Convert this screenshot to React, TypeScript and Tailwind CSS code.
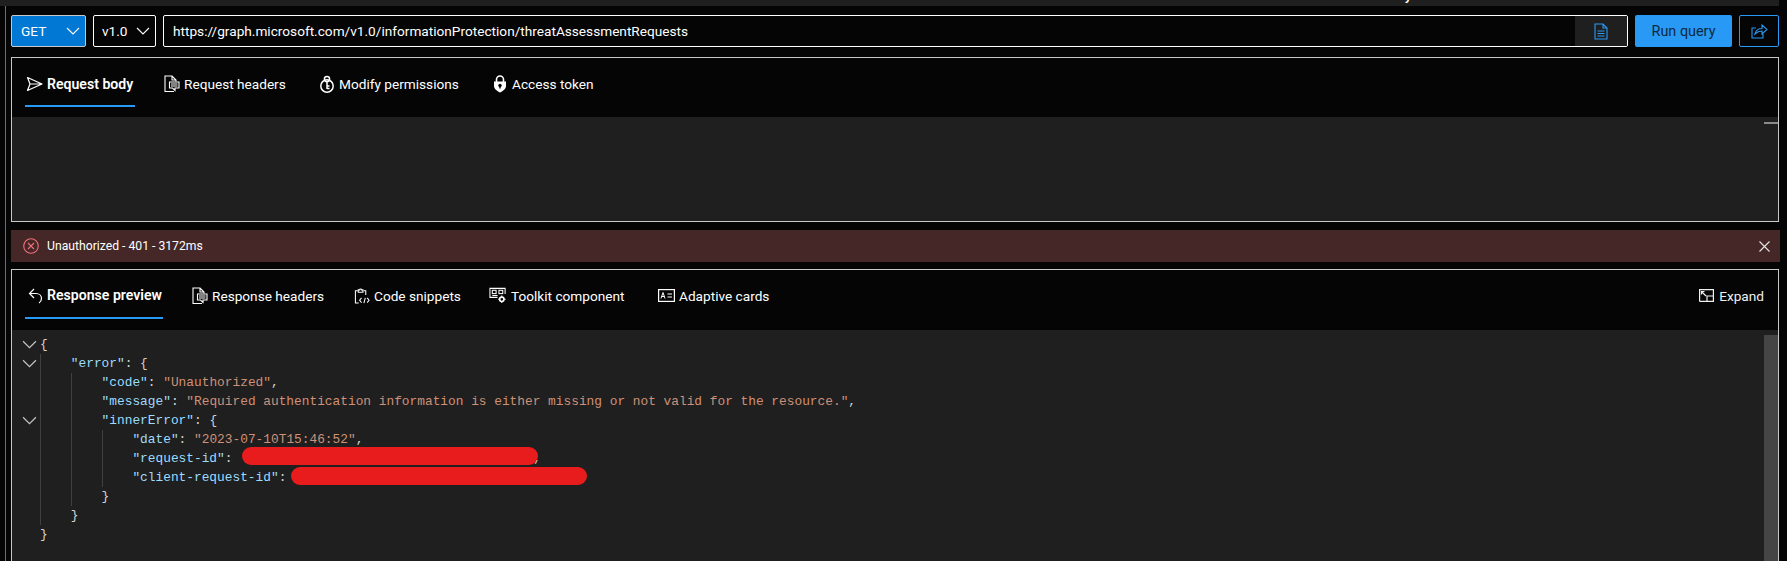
import React from "react";

function SendIcon() {
  return (
    <svg width="17" height="16" viewBox="0 0 17 16" fill="none" stroke="currentColor" strokeWidth="1.2">
      <path d="M1.5 1.5 L16 8 L1.5 14.5 L4 8 Z M4 8 H16" strokeLinejoin="round" />
    </svg>
  );
}
function DocLinesIcon() {
  return (
    <svg width="16" height="18" viewBox="0 0 16 18" fill="none" stroke="currentColor" strokeWidth="1.1">
      <path d="M10 16.5 H1 V1 H8 L12 5 V6.5 M8 1 V5 H12" />
      <path d="M5.5 7 H15 V13 H11 V15.5 L8.5 13 H5.5 Z" />
      <path d="M7 9 H13.5 M7 11 H13.5" />
    </svg>
  );
}
function KeyIcon() {
  return (
    <svg width="16" height="18" viewBox="0 0 16 18" fill="none" stroke="currentColor" strokeWidth="1.5">
      <circle cx="8" cy="11" r="6.2" />
      <circle cx="8" cy="4" r="2.6" />
      <path d="M8 6.5 V14 M8 11 H10.5 M8 13.5 H10.5" />
    </svg>
  );
}
function LockIcon() {
  return (
    <svg width="14" height="18" viewBox="0 0 14 18" fill="none" className="mr-[1px]">
      <path d="M3.5 7 V4.5 A3.5 3.5 0 0 1 10.5 4.5 V7" stroke="currentColor" strokeWidth="1.6" />
      <path d="M1 6.5 H13 V11 C13 14 10 16 7 17.5 C4 16 1 14 1 11 Z" fill="currentColor" />
      <circle cx="7" cy="10.5" r="1.7" fill="#050505" />
      <rect x="6.3" y="10.5" width="1.4" height="3" fill="#050505" />
    </svg>
  );
}
function ReplyIcon() {
  return (
    <svg width="17" height="16" viewBox="0 0 17 16" fill="none" stroke="currentColor" strokeWidth="1.2">
      <path d="M8 1 L3.5 5.5 L8 10 M3.5 5.5 H10 C13 5.5 15.5 7.5 15.5 10.5 C15.5 12.5 14.5 14 13 15" />
    </svg>
  );
}
function ClipboardCodeIcon() {
  return (
    <svg width="16" height="18" viewBox="0 0 17 18" fill="none" stroke="currentColor" strokeWidth="1.1">
      <path d="M4 3.5 H1.5 V16.5 H5 M10 3.5 H12.5 V8" />
      <path d="M4.5 5 V2.5 H6 A1 1 0 0 1 8 2.5 H9.5 V5 Z" />
      <path d="M8 11 L6 13.5 L8 16 M10.5 16.5 L12 11 M14 11 L16 13.5 L14 16" />
    </svg>
  );
}
function ToolkitIcon() {
  return (
    <svg width="18" height="17" viewBox="0 0 19 17" fill="none" stroke="currentColor" strokeWidth="1.1">
      <path d="M9 10.5 H1 V1 H17 V7" />
      <rect x="3.5" y="3" width="4" height="3.5" />
      <rect x="10.5" y="3" width="4" height="3.5" />
      <path d="M3.5 8.5 H9" />
      <circle cx="13.5" cy="12.5" r="2.3" strokeWidth="1.7" />
      <path d="M13.5 8.5 V10 M13.5 15 V16.5 M9.7 12.5 H11 M16 12.5 H17.5" />
    </svg>
  );
}
function CardIcon() {
  return (
    <svg width="17" height="13" viewBox="0 0 17 13" fill="none" stroke="currentColor" strokeWidth="1.2">
      <rect x="0.6" y="0.6" width="15.8" height="11.8" />
      <path d="M3 9.5 L5 3.5 L7 9.5 M3.7 7.5 H6.3" strokeWidth="1" />
      <path d="M9.5 5 H14 M9.5 8 H14" strokeWidth="1" />
    </svg>
  );
}
function ExpandIcon() {
  return (
    <svg width="15" height="13" viewBox="0 0 15 13" fill="none" stroke="currentColor" strokeWidth="1.2">
      <path d="M0.6 12.4 V0.6 H14.4 V12.4 H0.6" />
      <path d="M8 12.4 V7 H14.4 M2.5 2.5 L7 7 M2.5 5.5 V2.5 H5.5" />
    </svg>
  );
}
function ChevronIcon({ size = 14, stroke = 1.1 }: { size?: number; stroke?: number }) {
  return (
    <svg width={size} height={Math.round(size * 0.6)} viewBox="0 0 14 8" fill="none" stroke="currentColor" strokeWidth={stroke}>
      <path d="M1 1 L7 7 L13 1" />
    </svg>
  );
}

function Tab({
  icon,
  label,
  active,
  response,
  width,
  gap,
}: {
  icon: React.ReactNode;
  label: string;
  active?: boolean;
  response?: boolean;
  width: string;
  gap: string;
}) {
  return (
    <div className={`relative flex h-full items-center justify-start ${width} ${gap} ${response ? "pb-[8px]" : "pb-[6px]"}`}>
      <div className={`flex items-center gap-[4px] pl-[1px] text-white ${active ? "text-[14.1px] font-semibold" : ""}`}>
        {icon}
        <span className="whitespace-nowrap">{label}</span>
      </div>
      {active && <div className={`absolute left-0 right-0 h-[2px] bg-[#2899f5] ${response ? "bottom-[11px]" : "bottom-[10px]"}`} />}
    </div>
  );
}

function Key({ children }: { children: React.ReactNode }) {
  return <span className="text-[#9cdcfe]">{children}</span>;
}
function Str({ children }: { children: React.ReactNode }) {
  return <span className="text-[#ce9178]">{children}</span>;
}
function Punct({ children }: { children: React.ReactNode }) {
  return <span className="text-[#d4d4d4]">{children}</span>;
}

function Line({ indent, fold, children }: { indent: number; fold?: boolean; children: React.ReactNode }) {
  return (
    <div className="flex h-[19px] items-center">
      <div className="flex w-[28px] shrink-0 items-center justify-end pr-[3px] text-[#c5c5c5]">
        {fold && <ChevronIcon size={15} stroke={1.1} />}
      </div>
      <div className="flex h-full items-center whitespace-pre">
        {Array.from({ length: indent }).map((_, i) => (
          <span key={i} className="h-full w-[30.8px] shrink-0 border-l border-[#404040]" />
        ))}
        <span className="flex items-center">{children}</span>
      </div>
    </div>
  );
}

export default function App() {
  return (
    <div className="relative h-[561px] w-[1787px] overflow-hidden bg-[#050505] text-[13.65px] text-white [font-family:Roboto,'Noto_Sans',sans-serif]">
      <div className="relative h-[6px] w-[1779px] overflow-hidden bg-[#1f1f1f]">
        <span className="absolute left-[1374px] top-[-15px] font-semibold">Friday</span>
      </div>
      <div className="ml-[5px] flex h-[555px] w-[1774px] flex-col border-l border-[#6e6e6e]">
        <div className="flex flex-col pl-[5px]">
          {/* Query row */}
          <div className="mt-[9px] flex h-[32px] items-center">
            <div className="flex h-full w-[75px] items-center justify-between rounded-[2px] border border-[#c8c8c8] bg-[#0078d4] pl-[9px] pr-[5px]">
              <span className="pt-[1px]">GET</span>
              <ChevronIcon />
            </div>
            <div className="ml-[7px] flex h-full w-[63px] items-center justify-between rounded-[2px] border border-white pl-[8px] pr-[5px]">
              <span className="pt-[1px]">v1.0</span>
              <ChevronIcon />
            </div>
            <div className="ml-[7px] flex h-full w-[1465px] items-center justify-between rounded-[2px] border border-white pl-[9px]">
              <span className="pt-[1px]">https://graph.microsoft.com/v1.0/informationProtection/threatAssessmentRequests</span>
              <div className="flex h-full w-[52px] items-center justify-center bg-[#1f1f1f] text-[#2899f5]">
                <svg width="14" height="17" viewBox="0 0 14 17" fill="none" stroke="currentColor" strokeWidth="1.1">
                  <path d="M1 1 H9 L13 5 V16 H1 Z M9 1 V5 H13 M3.5 8 H10.5 M3.5 10.5 H10.5 M3.5 13 H10.5" />
                </svg>
              </div>
            </div>
            <div className="ml-[7px] flex h-full w-[97px] items-center justify-center rounded-[2px] bg-[#2899f5] pt-[1px] text-[14.4px] text-[#0c2a42]">
              Run query
            </div>
            <div className="ml-[7px] flex h-full w-[40px] items-center justify-center rounded-[2px] border border-[#2899f5] text-[#2899f5]">
              <svg width="17" height="16" viewBox="0 0 17 16" fill="none" stroke="currentColor" strokeWidth="1.1">
                <path d="M5 5 H1 V15 H12 V11 M4 11 C5 7 8 5.5 11 5.5 V2 L16 6.5 L11 11 V8 C8.5 8 6 9 4 11 Z" />
              </svg>
            </div>
          </div>

          {/* Request panel */}
          <div className="mt-[10px] flex h-[165px] w-[1768px] flex-col border border-[#c8c8c8]">
            <div className="flex h-[59px] shrink-0 items-center pl-[13px]">
              <Tab active icon={<SendIcon />} label="Request body" width="w-[110px]" gap="mr-[28px]" />
              <Tab icon={<DocLinesIcon />} label="Request headers" width="w-[122px]" gap="mr-[33px]" />
              <Tab icon={<KeyIcon />} label="Modify permissions" width="w-[141px]" gap="mr-[33px]" />
              <Tab icon={<LockIcon />} label="Access token" width="w-[100px]" gap="" />
            </div>
            <div className="relative flex-1 bg-[#1f1f1f]">
              <div className="absolute right-0 top-[5px] h-[2px] w-[14px] bg-[#8a8a8a]" />
            </div>
          </div>

          {/* Status bar */}
          <div className="mt-[8px] flex h-[32px] w-[1769px] items-center justify-between bg-[#442726] pl-[12px] pr-[10px]">
            <div className="flex items-center gap-[8px] text-[12.2px]">
              <svg width="16" height="16" viewBox="0 0 16 16" fill="none" stroke="#f1707b" strokeWidth="1.1">
                <circle cx="8" cy="8" r="7.3" />
                <path d="M5 5 L11 11 M11 5 L5 11" />
              </svg>
              <span className="pt-[1px]">Unauthorized - 401 - 3172ms</span>
            </div>
            <svg width="11" height="11" viewBox="0 0 11 11" fill="none" stroke="#e6e6e6" strokeWidth="1.1">
              <path d="M0.5 0.5 L10.5 10.5 M10.5 0.5 L0.5 10.5" />
            </svg>
          </div>

          {/* Response panel */}
          <div className="mt-[7px] flex h-[293px] w-[1768px] flex-col border border-b-0 border-[#c8c8c8]">
            <div className="flex h-[60px] shrink-0 items-center pl-[13px] pr-[14px]">
              <Tab response active icon={<ReplyIcon />} label="Response preview" width="w-[138px]" gap="mr-[28px]" />
              <Tab response icon={<DocLinesIcon />} label="Response headers" width="w-[132px]" gap="mr-[30px]" />
              <Tab response icon={<ClipboardCodeIcon />} label="Code snippets" width="w-[108px]" gap="mr-[27px]" />
              <Tab response icon={<ToolkitIcon />} label="Toolkit component" width="w-[137px]" gap="mr-[32px]" />
              <Tab response icon={<CardIcon />} label="Adaptive cards" width="w-[113px]" gap="" />
              <div className="ml-auto flex items-center gap-[5px] pb-[8px] text-[#f0f0f0]">
                <ExpandIcon />
                <span>Expand</span>
              </div>
            </div>
            <div className="relative flex-1 bg-[#1f1f1f] pt-[5px] text-[12.83px] text-[#d4d4d4] [font-family:'Liberation_Mono',monospace]">
              <div className="absolute bottom-0 right-0 top-[5px] w-[14px] bg-[#454545]" />
              <Line indent={0} fold><Punct>{"{"}</Punct></Line>
              <Line indent={1} fold><Key>"error"</Key><Punct>: {"{"}</Punct></Line>
              <Line indent={2}><Key>"code"</Key><Punct>: </Punct><Str>"Unauthorized"</Str><Punct>,</Punct></Line>
              <Line indent={2}><Key>"message"</Key><Punct>: </Punct><Str>"Required authentication information is either missing or not valid for the resource."</Str><Punct>,</Punct></Line>
              <Line indent={2} fold><Key>"innerError"</Key><Punct>: {"{"}</Punct></Line>
              <Line indent={3}><Key>"date"</Key><Punct>: </Punct><Str>"2023-07-10T15:46:52"</Str><Punct>,</Punct></Line>
              <Line indent={3}>
                <Key>"request-id"</Key><Punct>: </Punct>
                <span className="relative z-10 ml-[2px] inline-block h-[18px] w-[296px] -translate-y-[3px] rounded-[9px] bg-[#e81c1c]" />
                <Punct><span className="-ml-[5px]">,</span></Punct>
              </Line>
              <Line indent={3}>
                <Key>"client-request-id"</Key><Punct>: </Punct>
                <span className="-ml-[3px] inline-block h-[18px] w-[296px] -translate-y-[2px] rounded-[9px] bg-[#e81c1c]" />
              </Line>
              <Line indent={2}><Punct>{"}"}</Punct></Line>
              <Line indent={1}><Punct>{"}"}</Punct></Line>
              <Line indent={0}><Punct>{"}"}</Punct></Line>
            </div>
          </div>
        </div>
      </div>
    </div>
  );
}
